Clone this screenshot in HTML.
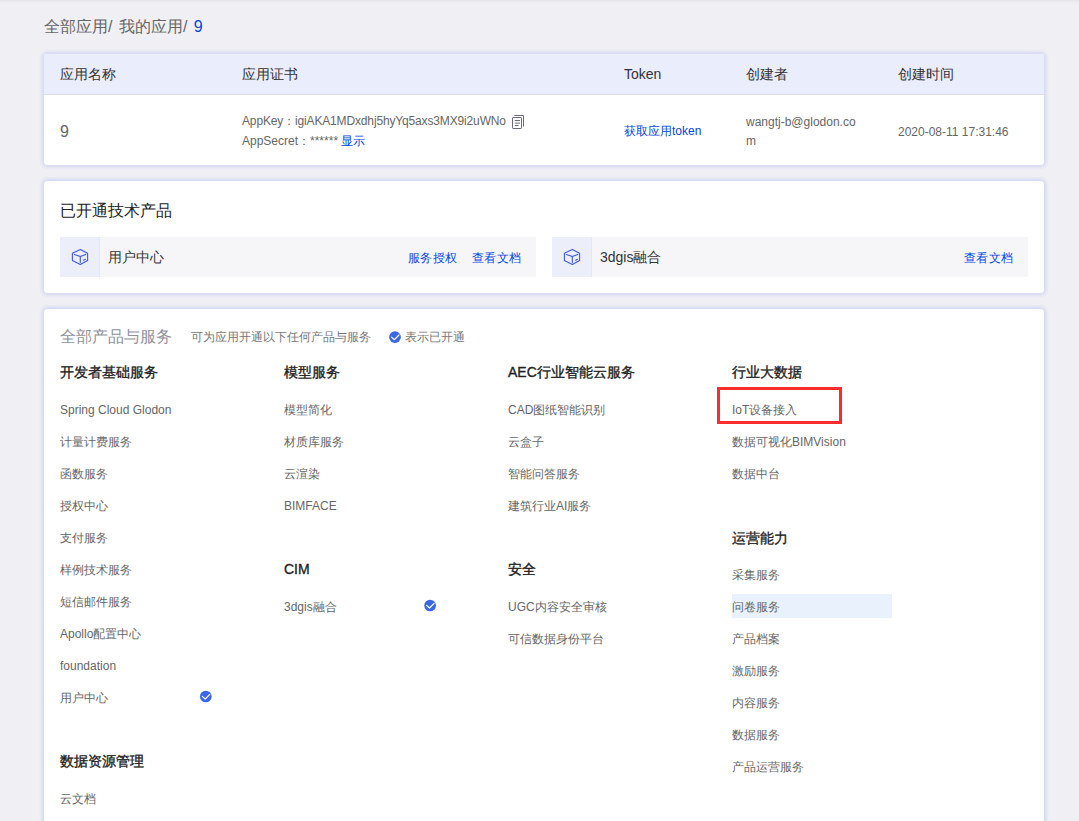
<!DOCTYPE html>
<html><head><meta charset="utf-8">
<style>
*{box-sizing:border-box;margin:0;padding:0}
html,body{width:1079px;height:821px;overflow:hidden}
body{background:#f0f0f4;font-family:"Liberation Sans",sans-serif;color:#333;position:relative}
.topline{position:absolute;left:0;top:0;width:1079px;height:3px;background:linear-gradient(to bottom,#e4e3e8 0px,#eae9ee 1.5px,#f0f0f4 3px)}
.abs{position:absolute;white-space:nowrap}
.card{position:absolute;left:43px;width:1002px;background:#fff;border:1px solid #d9ddf3;border-radius:4px;box-shadow:0 0 4px rgba(140,150,230,.45)}
.blue{color:#0646e4}
.crumb{left:44px;top:18px;font-size:16px;color:#666;line-height:18px}
.th{font-size:14px;color:#333;top:64px;line-height:20px}
.g{color:#666}
.prod{position:absolute;top:237px;height:40px;width:476px;background:#f6f6f9}
.prod .ic{position:absolute;left:0;top:0;width:40px;height:40px;background:#eceefa;border-right:1px solid #e5e7f7}
.sec{font-size:14px;color:#222;-webkit-text-stroke:0.35px #222;line-height:20px}
.it{font-size:12px;color:#666;line-height:20px}
.lnk{font-size:12px;letter-spacing:0.35px;line-height:20px}
</style></head><body>
<div class="topline"></div>
<div class="abs crumb">全部应用<span style="letter-spacing:1px">/ </span>我的应用<span style="letter-spacing:1px">/ </span><span class="blue">9</span></div>

<div class="card" style="top:53px;height:113px;overflow:hidden">
  <div style="position:absolute;left:0;top:0;width:1000px;height:41px;background:#eaedfc;border-bottom:1px solid #dcdbe9"></div>
</div>
<div class="abs th" style="left:60px">应用名称</div>
<div class="abs th" style="left:242px">应用证书</div>
<div class="abs th" style="left:624px">Token</div>
<div class="abs th" style="left:746px">创建者</div>
<div class="abs th" style="left:898px">创建时间</div>

<div class="abs g" style="left:60px;top:122px;font-size:16px;line-height:20px;color:#666">9</div>
<div class="abs g" style="left:242px;top:111px;font-size:12px;line-height:20px;letter-spacing:-0.15px">AppKey：igiAKA1MDxdhj5hyYq5axs3MX9i2uWNo</div>
<svg class="abs" style="left:510px;top:113px" width="18" height="18" viewBox="0 0 18 18"><g fill="none" stroke="#6b6b78" stroke-width="1"><rect x="2.5" y="4.5" width="9" height="11" rx="0.6"/><path d="M4.3 2.5 L13.5 2.5 L13.5 13.5"/><path d="M4.8 7.5 L10 7.5 M4.8 10.1 L10 10.1 M4.8 12.5 L8.5 12.5"/></g></svg>
<div class="abs g" style="left:242px;top:131px;font-size:12px;line-height:20px">AppSecret：****** <span class="blue">显示</span></div>
<div class="abs blue" style="left:624px;top:121px;font-size:12px;line-height:20px">获取应用token</div>
<div class="abs g" style="left:746px;top:112px;font-size:12px;line-height:20px">wangtj-b@glodon.co</div>
<div class="abs g" style="left:746px;top:131px;font-size:12px;line-height:20px">m</div>
<div class="abs g" style="left:898px;top:122px;font-size:12px;line-height:20px">2020-08-11 17:31:46</div>

<div class="card" style="top:180px;height:114px"></div>
<div class="abs" style="left:60px;top:201px;font-size:16px;line-height:20px;color:#222">已开通技术产品</div>
<div class="prod" style="left:60px"><div class="ic"><svg width="40" height="40" viewBox="0 0 40 40" style="position:absolute;left:0;top:0"><g fill="none" stroke="#3f58e6" stroke-width="1.1" stroke-linejoin="round" stroke-linecap="round"><path d="M20.3 12.4 L27.6 16.2 L27.6 23.5 L20.3 27.4 L12.4 23.5 L12.4 16.2 Z"/><path d="M14.4 17.4 L20.3 19.5 L25.8 17.4"/><path d="M20.3 19.5 L20.3 25.5"/><path d="M23.6 23.2 L25.4 22.3"/></g></svg></div></div>
<div class="prod" style="left:552px"><div class="ic"><svg width="40" height="40" viewBox="0 0 40 40" style="position:absolute;left:0;top:0"><g fill="none" stroke="#3f58e6" stroke-width="1.1" stroke-linejoin="round" stroke-linecap="round"><path d="M20.3 12.4 L27.6 16.2 L27.6 23.5 L20.3 27.4 L12.4 23.5 L12.4 16.2 Z"/><path d="M14.4 17.4 L20.3 19.5 L25.8 17.4"/><path d="M20.3 19.5 L20.3 25.5"/><path d="M23.6 23.2 L25.4 22.3"/></g></svg></div></div>
<div class="abs" style="left:108px;top:247px;font-size:14px;line-height:20px;color:#333">用户中心</div>
<div class="abs blue lnk" style="left:408px;top:248px">服务授权</div>
<div class="abs blue lnk" style="left:472px;top:248px">查看文档</div>
<div class="abs" style="left:600px;top:247px;font-size:14px;line-height:20px;color:#333">3dgis融合</div>
<div class="abs blue lnk" style="left:964px;top:248px">查看文档</div>

<div class="card" style="top:308px;height:560px"></div>
<div class="abs" style="left:60px;top:326.5px;font-size:16px;line-height:20px;color:#90919c">全部产品与服务</div>
<div class="abs" style="left:191px;top:327px;font-size:12px;line-height:20px;color:#777">可为应用开通以下任何产品与服务</div>
<svg class="abs" style="left:388px;top:330px" width="14" height="14" viewBox="0 0 14 14"><circle cx="7.00" cy="7.20" r="5.85" fill="#3b66e6"/><path d="M3.50 7.10 L6.40 9.70 L11.00 5.00" fill="none" stroke="#fff" stroke-width="1.2" stroke-linecap="round" stroke-linejoin="round"/></svg>
<div class="abs" style="left:405px;top:327px;font-size:12px;line-height:20px;color:#777">表示已开通</div>

<div class="abs" style="left:732px;top:594px;width:160px;height:24px;background:#e8f1fc"></div>
<div class="abs" style="left:717px;top:387px;width:125px;height:37px;border:3px solid #fb2c2c"></div>
<div class="abs sec" style="left:60px;top:362.2px;">开发者基础服务</div><div class="abs it" style="left:60px;top:400.0px;">Spring Cloud Glodon</div><div class="abs it" style="left:60px;top:432.0px;">计量计费服务</div><div class="abs it" style="left:60px;top:464.0px;">函数服务</div><div class="abs it" style="left:60px;top:496.0px;">授权中心</div><div class="abs it" style="left:60px;top:528.0px;">支付服务</div><div class="abs it" style="left:60px;top:560.0px;">样例技术服务</div><div class="abs it" style="left:60px;top:592.0px;">短信邮件服务</div><div class="abs it" style="left:60px;top:624.0px;">Apollo配置中心</div><div class="abs it" style="left:60px;top:656.0px;">foundation</div><div class="abs it" style="left:60px;top:688.0px;">用户中心</div><div class="abs sec" style="left:284px;top:362.2px;">模型服务</div><div class="abs it" style="left:284px;top:400.0px;">模型简化</div><div class="abs it" style="left:284px;top:432.0px;">材质库服务</div><div class="abs it" style="left:284px;top:464.0px;">云渲染</div><div class="abs it" style="left:284px;top:496.0px;">BIMFACE</div><div class="abs sec" style="left:508px;top:362.2px;">AEC行业智能云服务</div><div class="abs it" style="left:508px;top:400.0px;">CAD图纸智能识别</div><div class="abs it" style="left:508px;top:432.0px;">云盒子</div><div class="abs it" style="left:508px;top:464.0px;">智能问答服务</div><div class="abs it" style="left:508px;top:496.0px;">建筑行业AI服务</div><div class="abs sec" style="left:732px;top:362.2px;">行业大数据</div><div class="abs it" style="left:732px;top:400.0px;">IoT设备接入</div><div class="abs it" style="left:732px;top:432.0px;">数据可视化BIMVision</div><div class="abs it" style="left:732px;top:464.0px;">数据中台</div><div class="abs sec" style="left:60px;top:750.8px;">数据资源管理</div><div class="abs it" style="left:60px;top:788.7px;">云文档</div><div class="abs sec" style="left:284px;top:559.2px;">CIM</div><div class="abs it" style="left:284px;top:597.0px;">3dgis融合</div><div class="abs sec" style="left:508px;top:559.2px;">安全</div><div class="abs it" style="left:508px;top:597.0px;">UGC内容安全审核</div><div class="abs it" style="left:508px;top:629.0px;">可信数据身份平台</div><div class="abs sec" style="left:732px;top:527.5px;">运营能力</div><div class="abs it" style="left:732px;top:565.0px;">采集服务</div><div class="abs it" style="left:732px;top:597.0px;">问卷服务</div><div class="abs it" style="left:732px;top:629.0px;">产品档案</div><div class="abs it" style="left:732px;top:661.0px;">激励服务</div><div class="abs it" style="left:732px;top:693.0px;">内容服务</div><div class="abs it" style="left:732px;top:725.0px;">数据服务</div><div class="abs it" style="left:732px;top:757.0px;">产品运营服务</div>
<svg class="abs" style="left:198px;top:689px" width="14" height="14" viewBox="0 0 14 14"><circle cx="7.80" cy="7.50" r="5.85" fill="#3b66e6"/><path d="M4.30 7.40 L7.20 10.00 L11.80 5.30" fill="none" stroke="#fff" stroke-width="1.2" stroke-linecap="round" stroke-linejoin="round"/></svg>
<svg class="abs" style="left:423px;top:598px" width="14" height="14" viewBox="0 0 14 14"><circle cx="7.10" cy="7.50" r="5.85" fill="#3b66e6"/><path d="M3.60 7.40 L6.50 10.00 L11.10 5.30" fill="none" stroke="#fff" stroke-width="1.2" stroke-linecap="round" stroke-linejoin="round"/></svg>
</body></html>
